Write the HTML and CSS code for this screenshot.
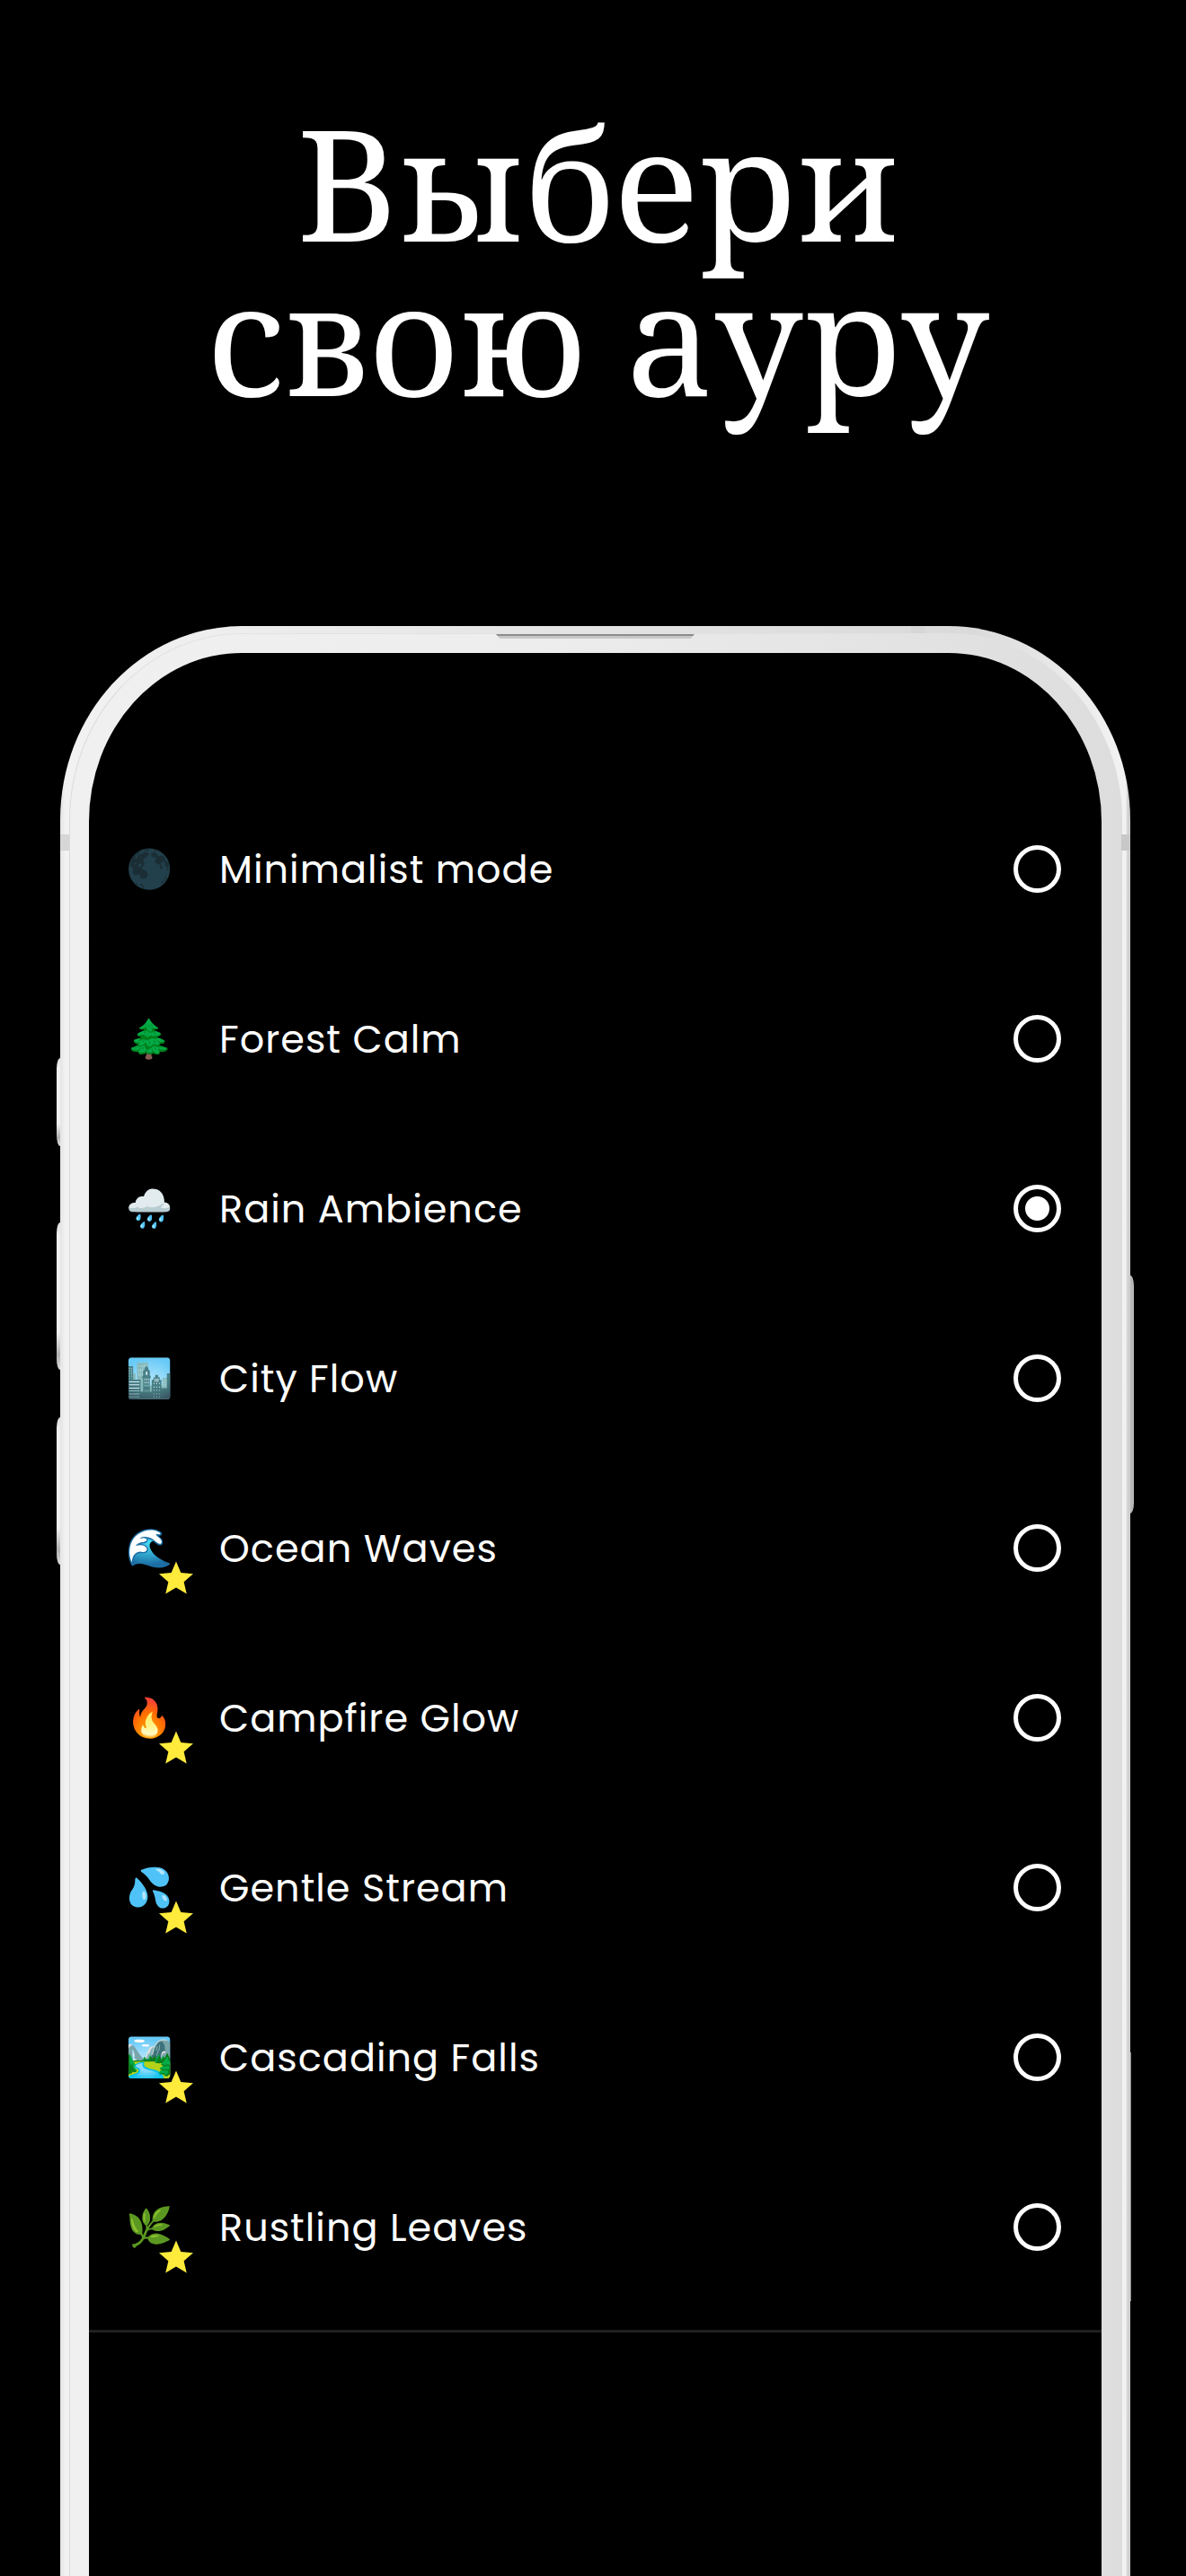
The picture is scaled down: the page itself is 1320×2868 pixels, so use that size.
FILE: index.html
```html
<!DOCTYPE html>
<html lang="ru">
<head>
  <meta charset="UTF-8">
  <meta name="viewport" content="width=device-width, initial-scale=1.0">
  <title>Выбери свою ауру</title>
  <link rel="stylesheet" href="styles.css">
</head>
<body>

  <svg class="defs" aria-hidden="true">
    <symbol id="star" viewBox="2 2 20 19">
      <path d="M12 17.27L18.18 21l-1.64-7.03L22 9.24l-7.19-.61L12 2 9.19 8.63 2 9.24l5.46 4.73L5.82 21z"/>
    </symbol>
  </svg>

  <h1>Выбери<br>свою ауру</h1>

  <main class="phone">
    <span class="side-button mute"></span>
    <span class="side-button volume-up"></span>
    <span class="side-button volume-down"></span>
    <span class="side-button power"></span>
    <span class="side-button antenna"></span>
    <span class="band band-left"></span>
    <span class="band band-right"></span>
    <span class="band band-top"></span>
    <span class="speaker"></span>

    <div class="rim">
      <form class="screen">
        <label class="option">
          <span class="icon">🌑</span>
          <span class="name">Minimalist mode</span>
          <input type="radio" name="aura" value="minimalist">
        </label>
        <label class="option">
          <span class="icon">🌲</span>
          <span class="name">Forest Calm</span>
          <input type="radio" name="aura" value="forest">
        </label>
        <label class="option">
          <span class="icon">🌧</span>
          <span class="name">Rain Ambience</span>
          <input type="radio" name="aura" value="rain" checked>
        </label>
        <label class="option">
          <span class="icon">🏙</span>
          <span class="name">City Flow</span>
          <input type="radio" name="aura" value="city">
        </label>
        <label class="option">
          <span class="icon">🌊<svg class="star"><use href="#star"/></svg></span>
          <span class="name">Ocean Waves</span>
          <input type="radio" name="aura" value="ocean">
        </label>
        <label class="option">
          <span class="icon">🔥<svg class="star"><use href="#star"/></svg></span>
          <span class="name">Campfire Glow</span>
          <input type="radio" name="aura" value="campfire">
        </label>
        <label class="option">
          <span class="icon">💦<svg class="star"><use href="#star"/></svg></span>
          <span class="name">Gentle Stream</span>
          <input type="radio" name="aura" value="stream">
        </label>
        <label class="option">
          <span class="icon">🏞<svg class="star"><use href="#star"/></svg></span>
          <span class="name">Cascading Falls</span>
          <input type="radio" name="aura" value="falls">
        </label>
        <label class="option">
          <span class="icon">🌿<svg class="star"><use href="#star"/></svg></span>
          <span class="name">Rustling Leaves</span>
          <input type="radio" name="aura" value="leaves">
        </label>
        <hr>
      </form>
    </div>
  </main>

</body>
</html>
```
FILE: styles.css
```css
* {
  box-sizing: border-box;
}

body {
  display: flex;
  flex-direction: column;
  min-height: 100vh;
  margin: 0;
  background: #000;
  color: #fff;
}

.defs {
  display: none;
}

h1 {
  margin: 116px 0 237px;
  padding-left: 12px;
  font-family: "Noto Serif", "Liberation Serif", serif;
  font-size: 172px;
  font-weight: 400;
  line-height: 172px;
  font-kerning: none;
  text-align: center;
}

/* phone body, runs off the bottom of the page */
.phone {
  position: relative;
  flex: 1;
  display: flex;
  margin: 0 62px 0 67px;
  padding: 8px 9px 0 10px;
  border-radius: 202px 202px 0 0 / 216px 216px 0 0;
  background:
    linear-gradient(to right, transparent, #d0d0d0 2px) right / 5px 100% no-repeat,
    linear-gradient(to right, #e4e4e4, #f2f2f2 6px, #e6e6e6 40%, #dadada 85%, #f2f2f2 99%);
}

.rim {
  flex: 1;
  display: flex;
  padding: 21px 23px 0 21px;
  border-left: 1px solid #dadada;
  border-top: 1px solid #e2e2e2;
  border-radius: 192px 192px 0 0 / 208px 208px 0 0;
  background: linear-gradient(to right, #f0f0f0, #eeeeee 40%, #dddddd);
}

.screen {
  flex: 1;
  padding-top: 146px;
  border-radius: 170px 170px 0 0 / 188px 188px 0 0;
  background: #000;
}

.option {
  display: flex;
  align-items: center;
  height: 189px;
  padding: 0 45px 0 41px;
  cursor: pointer;
}

.icon {
  position: relative;
  width: 52px;
  font-family: "Noto Color Emoji", sans-serif;
  font-size: 42px;
  line-height: 48px;
}

.star {
  position: absolute;
  left: 37px;
  top: 38px;
  width: 38px;
  height: 37px;
  fill: #ffeb3b;
}

.name {
  flex: 1;
  margin-left: 52px;
  font-family: Poppins, Lato, sans-serif;
  font-size: 43px;
  line-height: 64px;
  letter-spacing: 1px;
}

.option input {
  appearance: none;
  width: 53px;
  height: 53px;
  margin: 0;
  border: 5px solid #fff;
  border-radius: 50%;
  cursor: pointer;
}

.option input:checked {
  background: radial-gradient(circle, #fff 13px, transparent 14px);
}

hr {
  height: 3px;
  margin: 20px 0 0;
  border: 0;
  background: #202020;
}

/* hardware details on the frame */
.side-button {
  position: absolute;
  left: -4px;
  width: 4px;
  border-radius: 4px 0 0 4px / 12px 0 0 12px;
  background: linear-gradient(#e0e0e0, #f0f0f0 10%, #f0f0f0 75%, #b0b0b0 90%, #e0e0e0);
}

.mute {
  top: 481px;
  height: 98px;
}

.volume-up {
  top: 664px;
  height: 164px;
}

.volume-down {
  top: 881px;
  height: 164px;
}

.power {
  left: auto;
  right: -4px;
  top: 723px;
  height: 265px;
  border-radius: 0 4px 4px 0 / 0 12px 12px 0;
  background: #b8b8b8;
}

.antenna {
  left: auto;
  right: -1px;
  top: 1588px;
  width: 1px;
  height: 277px;
  border-radius: 0;
  background: #8a8a8a;
}

.band {
  position: absolute;
  background: #d6d6d6;
}

.band-left,
.band-right {
  top: 232px;
  width: 10px;
  height: 18px;
}

.band-left {
  left: 0;
}

.band-right {
  right: 0;
  background: #c8c8c8;
}

.band-top {
  top: 0;
  right: 228px;
  width: 16px;
  height: 8px;
}

.speaker {
  position: absolute;
  top: 9px;
  left: 485px;
  width: 221px;
  height: 5px;
  background: linear-gradient(#8c8c8c 2px, #c8c8c8 2px);
  clip-path: polygon(0 0, 100% 0, 98% 100%, 2% 100%);
}
```
